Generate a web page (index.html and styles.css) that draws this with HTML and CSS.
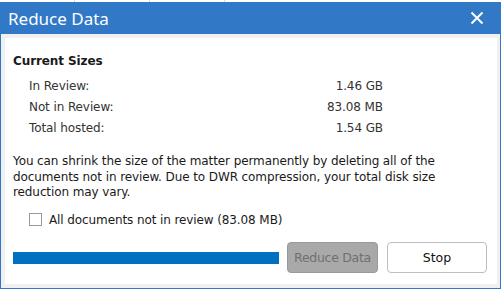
FILE: index.html
```html
<!DOCTYPE html>
<html lang="en">
<head>
  <meta charset="UTF-8">
  <meta name="viewport" content="width=device-width, initial-scale=1.0">
  <title>Reduce Data</title>
  <link rel="stylesheet" href="styles.css">
</head>
<body>
  <div class="backdrop">
    <span></span><span></span><span></span>
  </div>
  <div class="dialog">
    <div class="titlebar">
      <span class="title">Reduce Data</span>
      <button class="close" aria-label="Close">
        <svg width="14" height="14" viewBox="0 0 14 14">
          <path d="M1.5 1.5 L12.5 12.5 M12.5 1.5 L1.5 12.5" stroke="#fff" stroke-width="2" fill="none"/>
        </svg>
      </button>
    </div>
    <div class="content">
      <div class="heading">Current Sizes</div>
      <div class="sizes">
        <div class="row"><span>In Review:</span><span>1.46 GB</span></div>
        <div class="row"><span>Not in Review:</span><span>83.08 MB</span></div>
        <div class="row"><span>Total hosted:</span><span>1.54 GB</span></div>
      </div>
      <p class="note">You can shrink the size of the matter permanently by deleting all of the documents not in review. Due to DWR compression, your total disk size reduction may vary.</p>
      <label class="option">
        <span class="box"></span>
        All documents not in review (83.08 MB)
      </label>
      <div class="footer">
        <div class="progress"></div>
        <button class="btn disabled">Reduce Data</button>
        <button class="btn">Stop</button>
      </div>
    </div>
  </div>
</body>
</html>
```

FILE: styles.css
```css
body {
  margin: 0;
  background: #fff;
  font-family: "DejaVu Sans", sans-serif;
  font-size: 12px;
  letter-spacing: -0.1px;
  color: #1a1a1a;
}
.backdrop {
  height: 2px;
  display: flex;
}
.backdrop span {
  width: 74px;
  border-right: 1px solid #d8d8d8;
}
.dialog {
  width: 499px;
  height: 286px;
  border: 1px solid #3178c6;
  border-top: none;
  background: #f0f0f0;
  display: flex;
  flex-direction: column;
}
.titlebar {
  height: 32px;
  background: #3178c6;
  color: #fff;
  display: flex;
  align-items: center;
  justify-content: space-between;
  padding: 0 16px 0 7px;
}
.title {
  font-family: "Noto Sans", sans-serif;
  font-size: 17px;
  letter-spacing: 0;
}
.close {
  background: none;
  border: none;
  padding: 0;
  width: 14px;
  height: 14px;
  display: flex;
}
.content {
  flex: 1;
  margin: 4px 3px 4px 4px;
  background: #fff;
  padding: 15px 9px 0 8px;
  display: flex;
  flex-direction: column;
}
.heading {
  font-weight: bold;
  line-height: 16px;
}
.sizes {
  width: 354px;
  margin: 6px 0 0 16px;
  color: #333;
}
.row {
  display: flex;
  justify-content: space-between;
  line-height: 16px;
  padding: 3px 0 2px;
}
.note {
  margin: 16px 0 0;
  line-height: 15.5px;
  width: 445px;
}
.option {
  display: flex;
  align-items: center;
  gap: 7px;
  margin: 11px 0 0 16px;
  line-height: 16px;
}
.box {
  width: 11px;
  height: 11px;
  border: 1px solid #999;
}
.footer {
  display: flex;
  align-items: center;
  margin-top: 14px;
}
.progress {
  width: 266px;
  height: 12px;
  background: #0070c0;
  margin: 2px 8px 0 0;
}
.btn {
  width: 100px;
  height: 31px;
  padding: 0;
  white-space: nowrap;
  border: 1px solid #bdbdbd;
  border-radius: 4px;
  background: #fff;
  font: inherit;
  font-size: 12.5px;
  color: #111;
}
.btn.disabled {
  width: 91px;
  margin-right: 9px;
  background: #a9a9a9;
  border-color: #999;
  color: #707070;
  letter-spacing: -0.3px;
}
```
